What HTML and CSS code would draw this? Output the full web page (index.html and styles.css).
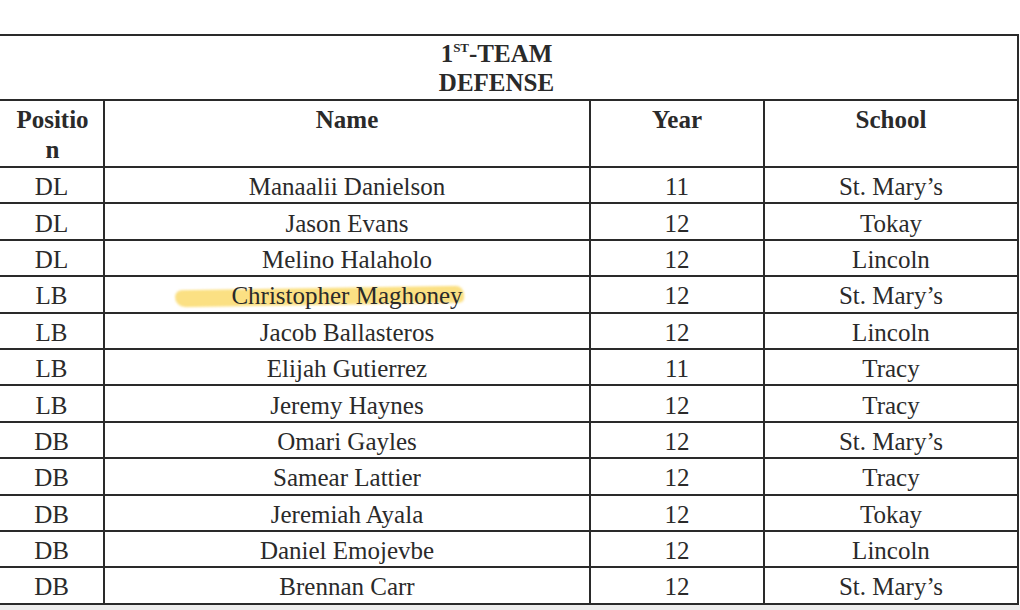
FILE: index.html
```html
<!DOCTYPE html>
<html>
<head>
<meta charset="utf-8">
<link rel="stylesheet" href="styles.css">
</head>
<body>
<div class="page">
<table class="roster">
  <colgroup>
    <col class="c-pos"><col class="c-name"><col class="c-year"><col class="c-school">
  </colgroup>
  <tr class="title-row">
    <td colspan="4" class="title"><div class="title-text">1<sup>ST</sup>-TEAM<br>DEFENSE</div></td>
  </tr>
  <tr class="head-row">
    <th class="pos-head">Position</th>
    <th>Name</th>
    <th>Year</th>
    <th>School</th>
  </tr>
  <tr><td>DL</td><td>Manaalii Danielson</td><td>11</td><td>St. Mary’s</td></tr>
  <tr><td>DL</td><td>Jason Evans</td><td>12</td><td>Tokay</td></tr>
  <tr><td>DL</td><td>Melino Halaholo</td><td>12</td><td>Lincoln</td></tr>
  <tr><td>LB</td><td><span class="hl-wrap"><span class="hl"></span><span class="hl-text">Christopher Maghoney</span></span></td><td>12</td><td>St. Mary’s</td></tr>
  <tr><td>LB</td><td>Jacob Ballasteros</td><td>12</td><td>Lincoln</td></tr>
  <tr><td>LB</td><td>Elijah Gutierrez</td><td>11</td><td>Tracy</td></tr>
  <tr><td>LB</td><td>Jeremy Haynes</td><td>12</td><td>Tracy</td></tr>
  <tr><td>DB</td><td>Omari Gayles</td><td>12</td><td>St. Mary’s</td></tr>
  <tr><td>DB</td><td>Samear Lattier</td><td>12</td><td>Tracy</td></tr>
  <tr><td>DB</td><td>Jeremiah Ayala</td><td>12</td><td>Tokay</td></tr>
  <tr><td>DB</td><td>Daniel Emojevbe</td><td>12</td><td>Lincoln</td></tr>
  <tr><td>DB</td><td>Brennan Carr</td><td>12</td><td>St. Mary’s</td></tr>
</table>
</div>
</body>
</html>
```

FILE: styles.css
```css
html, body {
  margin: 0;
  padding: 0;
  background: #ececec;
  overflow: hidden;
}
.page {
  width: 1020px;
  height: 605px;
  background: #ffffff;
  padding-top: 34px;
  box-sizing: border-box;
  font-family: "Liberation Serif", "Times New Roman", serif;
  color: #2a2a2a;
}
.roster {
  border-collapse: collapse;
  margin-left: -2px;
  width: 1019px;
  table-layout: fixed;
  font-size: 25px;
}
.c-pos { width: 105px; }
.c-name { width: 486px; }
.c-year { width: 174px; }
.c-school { width: 254px; }
.roster td, .roster th {
  border: 2px solid #2a2a2a;
  text-align: center;
  padding: 3px 4px 0;
  height: 31.4px;
  line-height: 31px;
  vertical-align: middle;
  white-space: nowrap;
}
.title-row td {
  height: 60px;
  vertical-align: top;
  padding-top: 3px;
  line-height: 29px;
}
.title-text {
  font-weight: bold;
  padding-right: 24px;
}
.title-text sup {
  font-size: 13px;
  line-height: 0;
  vertical-align: 10px;
}
.head-row th {
  height: 61px;
  line-height: 30px;
  vertical-align: top;
  padding-top: 4px;
  font-weight: bold;
  white-space: normal;
}
.head-row .pos-head {
  padding: 4px 8px 0 10px;
  word-break: break-all;
}
.hl-wrap {
  position: relative;
  display: inline-block;
}
.hl {
  position: absolute;
  left: -56px;
  right: -2px;
  top: 8px;
  height: 17px;
  background: rgba(250, 214, 90, 0.75);
  border-radius: 8px 10px 6px 12px;
  transform: rotate(-0.9deg);
  filter: blur(0.8px);
}
.hl-text {
  position: relative;
}
```
